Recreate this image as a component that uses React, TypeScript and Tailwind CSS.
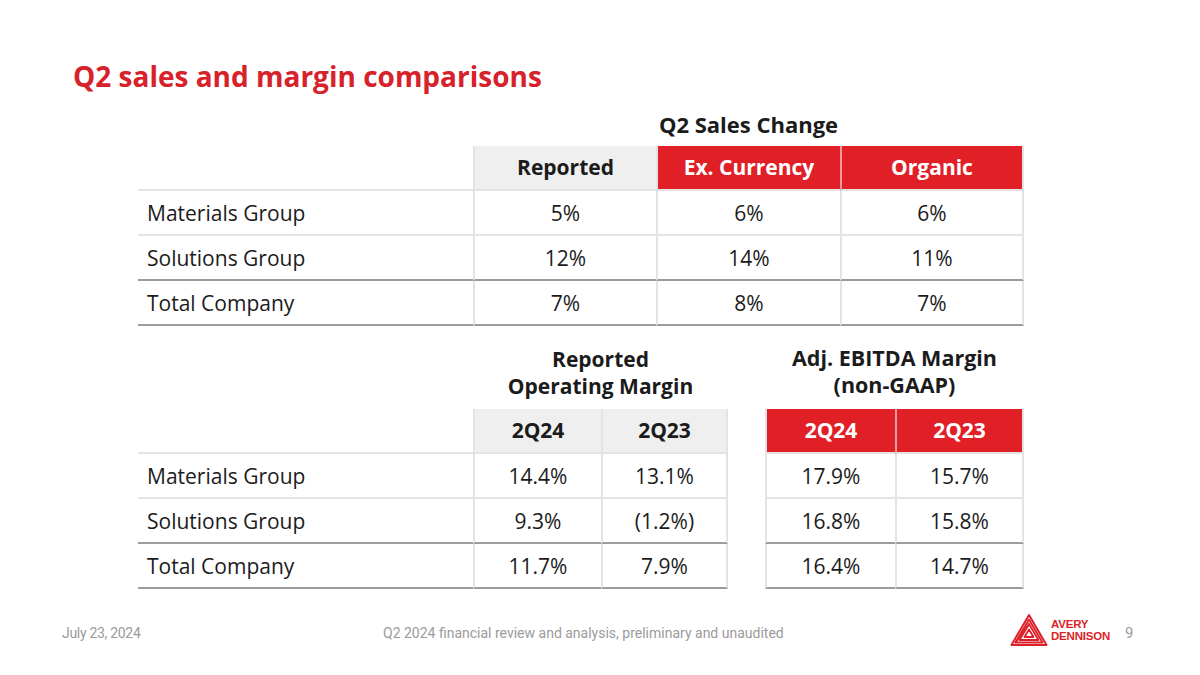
import React from "react";

const RED = "bg-[#e01f26]";

type Col = { w: string; kind: "label" | "grey" | "red" | "data" | "gap"; right?: boolean };

const font = { fontFamily: '"Open Sans", "Liberation Sans", sans-serif' };

function Cell({
  col,
  children,
  line,
  header,
  first,
}: {
  col: Col;
  children?: React.ReactNode;
  line: "light" | "dark";
  header?: boolean;
  first?: boolean;
}) {
  if (col.kind === "gap") return <div className={`${col.w} shrink-0`} />;
  const bottom = line === "dark" ? "border-b-2 border-b-[#9c9c9c]" : "border-b-2 border-b-[#e3e3e3]";
  if (col.kind === "label") {
    return (
      <div className={`${col.w} shrink-0 h-full ${bottom} flex items-center pl-[9px] pt-[2px] text-[21px] text-[#1b1b1b]`}>
        {children}
      </div>
    );
  }
  let bg = "";
  let txt = "text-[#1b1b1b]";
  let side = "border-l-2 border-l-[#e3e3e3]";
  if (header && col.kind === "grey") bg = "bg-[#efefef] font-bold";
  if (header && col.kind === "red") {
    bg = `${RED} font-bold`;
    txt = "text-white";
    side = first ? "border-l-2 border-l-[#e3e3e3]" : "border-l-2 border-l-[#ef9a9c]";
  }
  const right = col.right ? "border-r-2 border-r-[#e3e3e3]" : "";
  const pad = header ? "pt-[1px]" : "pt-[2px]";
  return (
    <div className={`${col.w} shrink-0 h-full ${bottom} ${side} ${right} ${bg} ${txt} ${pad} flex items-center justify-center text-[21px]`}>
      {children}
    </div>
  );
}

function Row({
  cols,
  values,
  line,
  header,
}: {
  cols: Col[];
  values: string[];
  line: "light" | "dark";
  header?: boolean;
}) {
  let vi = 0;
  let prevRed = false;
  return (
    <div className="flex h-[45px]">
      {cols.map((c, i) => {
        if (c.kind === "gap") {
          prevRed = false;
          return <Cell key={i} col={c} line={line} />;
        }
        const v = values[vi++];
        const first = c.kind === "red" && !prevRed;
        prevRed = c.kind === "red";
        return (
          <Cell key={i} col={c} line={line} header={header} first={first}>
            {v}
          </Cell>
        );
      })}
    </div>
  );
}

const salesCols: Col[] = [
  { w: "w-[335px]", kind: "label" },
  { w: "w-[183px]", kind: "grey" },
  { w: "w-[184px]", kind: "red" },
  { w: "w-[184px]", kind: "red", right: true },
];

const marginCols: Col[] = [
  { w: "w-[335px]", kind: "label" },
  { w: "w-[128px]", kind: "grey" },
  { w: "w-[127px]", kind: "grey", right: true },
  { w: "w-[37px]", kind: "gap" },
  { w: "w-[130px]", kind: "red" },
  { w: "w-[129px]", kind: "red", right: true },
];

const salesRows = [
  ["Materials Group", "5%", "6%", "6%"],
  ["Solutions Group", "12%", "14%", "11%"],
  ["Total Company", "7%", "8%", "7%"],
];

const marginRows = [
  ["Materials Group", "14.4%", "13.1%", "17.9%", "15.7%"],
  ["Solutions Group", "9.3%", "(1.2%)", "16.8%", "15.8%"],
  ["Total Company", "11.7%", "7.9%", "16.4%", "14.7%"],
];

function Logo() {
  return (
    <div className="flex items-center gap-[3px]">
      <svg width="38" height="34" viewBox="0 0 38 34" fill="none" stroke="#dc1f28" strokeLinejoin="round" strokeLinecap="round">
        <path d="M19 2 L36.5 32 L1.5 32 Z" strokeWidth="2" />
        <path d="M19 6.5 L32.5 29.5 L5.5 29.5 Z" strokeWidth="1.8" />
        <path d="M19 11 L28.5 27 L9.5 27 Z" strokeWidth="1.8" />
        <path d="M19 16.5 L23.5 24 L14.5 24 Z" strokeWidth="1.8" />
        <path d="M5.5 29.5 L19 11" strokeWidth="1.8" />
      </svg>
      <div
        className="flex flex-col text-[#dc1f28] font-bold text-[11.5px] leading-[12px] tracking-[-0.2px]"
        style={{ fontFamily: '"Liberation Sans", Arial, sans-serif' }}
      >
        <span>AVERY</span>
        <span>DENNISON</span>
      </div>
    </div>
  );
}

export default function App() {
  return (
    <div className="w-[1200px] h-[675px] bg-white flex flex-col" style={font}>
      <h1 className="mt-[57px] ml-[73px] text-[28px] leading-[38px] font-bold text-[#d7212b]">
        Q2 sales and margin comparisons
      </h1>

      <div className="ml-[138px] w-[886px] flex flex-col">
        <div className="mt-[15px] flex h-[28px]">
          <div className="w-[335px]" />
          <div className="w-[551px] text-center text-[22px] leading-[28px] font-bold text-[#1b1b1b]">
            Q2 Sales Change
          </div>
        </div>

        <div className="mt-[8px]">
          <Row cols={salesCols} values={["", "Reported", "Ex. Currency", "Organic"]} line="light" header />
          {salesRows.map((r, i) => (
            <Row key={i} cols={salesCols} values={r} line={i === 0 ? "light" : "dark"} />
          ))}
        </div>

        <div className="mt-[20px] flex text-[21px] leading-[27px] font-bold text-[#1b1b1b]">
          <div className="w-[335px]" />
          <div className="w-[255px] text-center">
            Reported
            <br />
            Operating Margin
          </div>
          <div className="w-[37px]" />
          <div className="w-[259px] text-center text-[21.5px] -mt-[2px]">
            Adj. EBITDA Margin
            <br />
            (non-GAAP)
          </div>
        </div>

        <div className="mt-[9px]">
          <Row cols={marginCols} values={["", "2Q24", "2Q23", "2Q24", "2Q23"]} line="light" header />
          {marginRows.map((r, i) => (
            <Row key={i} cols={marginCols} values={r} line={i === 0 ? "light" : "dark"} />
          ))}
        </div>
      </div>

      <div
        className="mt-[24px] flex items-center text-[14px] text-[#9b9b9b]"
        style={{ fontFamily: 'Roboto, "Liberation Sans", sans-serif' }}
      >
        <span className="ml-[62px] w-[321px] pt-[6px] tracking-[-0.3px]">July 23, 2024</span>
        <span className="w-[627px] pt-[6px]">Q2 2024 financial review and analysis, preliminary and unaudited</span>
        <Logo />
        <span className="ml-[15px] text-[15px] pt-[6px]">9</span>
      </div>
    </div>
  );
}
